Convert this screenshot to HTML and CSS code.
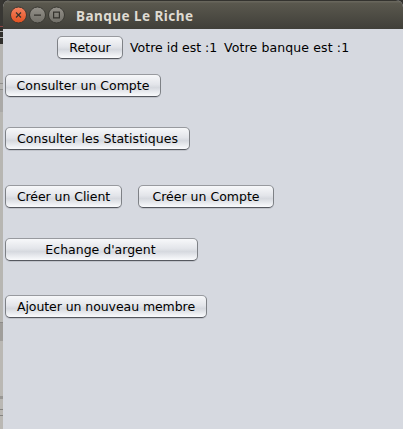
FILE: index.html
```
<!DOCTYPE html>
<html lang="fr">
<head>
<meta charset="utf-8">
<title>Banque Le Riche</title>
<link rel="stylesheet" href="styles.css">
</head>
<body>
<div class="desktop"></div>
<div class="window">
  <header class="titlebar">
    <svg class="controls" width="56" height="18" viewBox="0 0 56 18">
      <defs>
        <linearGradient id="close" x1="0" y1="0" x2="0" y2="1"><stop offset="0" stop-color="#f58362"/><stop offset="1" stop-color="#e2501f"/></linearGradient>
        <linearGradient id="grey" x1="0" y1="0" x2="0" y2="1"><stop offset="0" stop-color="#94918a"/><stop offset="1" stop-color="#706e67"/></linearGradient>
      </defs>
      <g stroke="#393832">
        <circle cx="8.5" cy="9" r="8" fill="url(#close)"/>
        <circle cx="27.5" cy="9" r="8" fill="url(#grey)"/>
        <circle cx="46.5" cy="9" r="8" fill="url(#grey)"/>
      </g>
      <g fill="none" stroke="#35332e" stroke-width="1.2">
        <path d="M6 6.5l5 5M11 6.5l-5 5M24 9.2h7"/>
        <path d="M43.6 6.1h5.8v5.8h-5.8z"/>
      </g>
    </svg>
    <h1 class="title">Banque Le Riche</h1>
  </header>
  <main class="content">
    <div class="row top">
      <button class="btn retour">Retour</button>
      <span class="label">Votre id est :1</span>
      <span class="label bank">Votre banque est :1</span>
    </div>
    <div class="row consult"><button class="btn compte">Consulter un Compte</button></div>
    <div class="row stats"><button class="btn statistiques">Consulter les Statistiques</button></div>
    <div class="row create">
      <button class="btn client">Créer un Client</button>
      <button class="btn new-account">Créer un Compte</button>
    </div>
    <div class="row exchange"><button class="btn argent">Echange d'argent</button></div>
    <div class="row member"><button class="btn membre">Ajouter un nouveau membre</button></div>
  </main>
</div>
</body>
</html>
```
FILE: styles.css
```
* { box-sizing: border-box; }
body {
  margin: 0;
  width: 403px;
  height: 429px;
  display: flex;
  overflow: hidden;
  background: #34332f;
  font-family: "DejaVu Sans", sans-serif;
}
.desktop {
  width: 3px;
  background: linear-gradient(#383733 0 26px, #8b4545 26px 27px, #302f2c 27px 31px, #aaa 31px 32px, #302f2c 32px 37px, #aaa 37px 38px, #302f2c 38px 44px, #b5b4b1 44px 83px, #8f8e8b 83px 84px, #b5b4b1 84px 89px, #8f8e8b 89px 90px, #aaa9a7 90px 112px, #b7b6b2 112px 322px, #8d8b89 322px 323px, #a09e9b 323px 341px, #bab8b4 341px 396px, #999794 396px 399px, #bab8b4 399px 409px, #858380 409px 410px, #bab8b4 410px 415px, #858380 415px 416px, #bab8b4 416px);
}
.window { width: 400px; background: #d6d9e0; border-radius: 7px 7px 0 0; }
.titlebar {
  height: 29px;
  padding: 1px 0 0 7px;
  display: flex;
  align-items: center;
  background: linear-gradient(#34332f 0 1px, #68665c 1px 2px, #5a584e 3px, #403f39);
  border-radius: 7px 7px 0 0;
}
.title {
  margin: 0 0 0 10px;
  padding-top: 2px;
  font: bold 13.5px/18px "Noto Sans", sans-serif;
  letter-spacing: .47px;
  color: #dfdbd2;
  white-space: nowrap;
}
.content { padding: 7px 2px 0; }
.row { display: flex; height: 23px; }
.top { padding-left: 52px; }
.consult { margin-top: 15px; }
.stats { margin-top: 30px; }
.create { margin-top: 35px; gap: 16px; }
.exchange { margin-top: 30px; }
.member { margin-top: 34px; }
.btn {
  height: 23px;
  padding: 0;
  border: 1px solid;
  border-color: #989a9f #7e8186 #55585f #7e8186;
  border-radius: 5px;
  background: linear-gradient(#f7f8fa, #e3e5ea 45%, #d6d9df 60%, #fafbfd);
  box-shadow: 0 1px 0 #c0c3ca;
  font: 12.5px/21px "DejaVu Sans", sans-serif;
  color: #000;
  white-space: nowrap;
}
.label { margin-left: 7px; width: 88px; font-size: 12.5px; line-height: 23px; white-space: nowrap; }
.bank { margin-left: 6px; width: auto; letter-spacing: .12px; }
.retour { width: 66px; }
.compte { width: 156px; }
.statistiques { width: 185px; letter-spacing: .06px; }
.client { width: 117px; letter-spacing: -.06px; }
.new-account { width: 136px; }
.argent { width: 193px; padding-right: 2px; }
.membre { width: 202px; letter-spacing: -.07px; }
```
